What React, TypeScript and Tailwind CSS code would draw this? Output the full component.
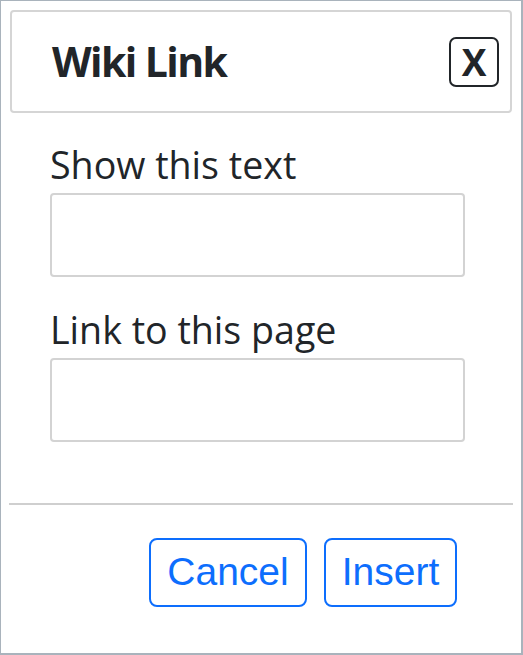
import { useState } from 'react';

const App = () => {
  const [text, setText] = useState('');
  const [page, setPage] = useState('');

  return (
    <div className="flex h-[655px] w-[523px] flex-col border-t border-l border-r-2 border-b-2 border-[#a9b3bc] bg-white text-[#212529] font-['Open_Sans','Noto_Sans',sans-serif]">
      <div className="mx-[9px] mt-[9px] flex h-[103px] items-center justify-between rounded-[4px] border-2 border-[#d5d5d5] pl-[40px] pr-[11px]">
        <h1 className="text-[41px] font-bold leading-none tracking-[-1.6px]">Wiki Link</h1>
        <button className="flex h-[50px] w-[50px] items-center justify-center rounded-[7px] border-2 border-[#212529] text-[37px] font-bold leading-none">
          X
        </button>
      </div>
      <div className="flex flex-col px-[49px] pt-[30px]">
        <label className="text-[37.6px] leading-[44px]">Show this text</label>
        <input
          className="mt-[6px] h-[84px] w-[415px] rounded-[4px] border-2 border-[#d3d3d3] outline-none"
          value={text}
          onChange={(e) => setText(e.target.value)}
        />
        <label className="mt-[31px] text-[37.6px] leading-[44px]">Link to this page</label>
        <input
          className="mt-[6px] h-[84px] w-[415px] rounded-[4px] border-2 border-[#d3d3d3] outline-none"
          value={page}
          onChange={(e) => setPage(e.target.value)}
        />
      </div>
      <div className="mx-[8px] mt-[61px] h-[1.5px] bg-[#cfcfcf]" />
      <div className="mt-[33px] flex justify-end gap-[17px] pr-[64px] font-['Liberation_Sans',Arial,sans-serif]">
        <button className="h-[69px] w-[158px] rounded-[8px] border-2 border-[#0d6efd] text-[39px] text-[#0d6efd]">
          Cancel
        </button>
        <button className="h-[69px] w-[133px] rounded-[8px] border-2 border-[#0d6efd] text-[39px] text-[#0d6efd]">
          Insert
        </button>
      </div>
    </div>
  );
};

export default App;
